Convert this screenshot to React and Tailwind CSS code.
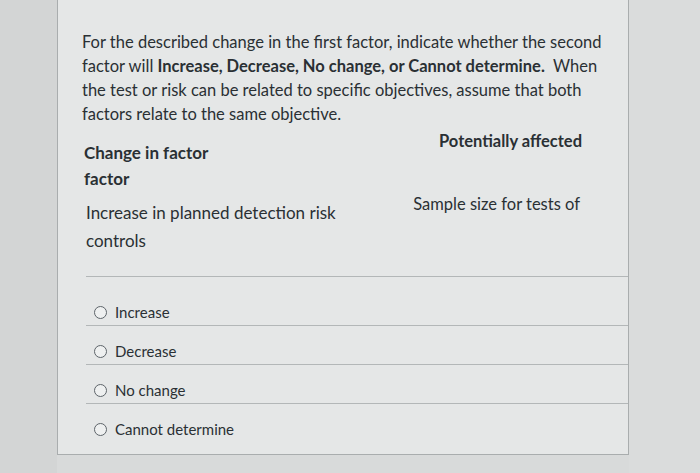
export default function App() {
  const options = ["Increase", "Decrease", "No change", "Cannot determine"];
  return (
    <div className="w-[700px] h-[473px] overflow-hidden flex bg-[#d8dada] text-[#2a3034]" style={{ fontFamily: "Lato, 'Noto Sans', sans-serif" }}>
      <div className="w-[57px] shrink-0 bg-[#d3d5d5]" />
      <div className="w-[572px] shrink-0 h-[455px] bg-[#e5e7e7] border-x border-b border-[#a9adae] flex flex-col">
        <p className="pl-[24px] pr-[10px] pt-[30px] text-[16.5px] leading-[24px]">
          For the described change in the first factor, indicate whether the second
          <br />
          factor will <b className="font-bold">Increase, Decrease, No change, or Cannot determine.</b>&nbsp; When
          <br />
          the test or risk can be related to specific objectives, assume that both
          <br />
          factors relate to the same objective.
        </p>

        <div className="flex pl-[26px] pr-[46px] mt-[2px]">
          <div className="flex-1 pt-[12px] font-bold text-[17px] leading-[26px]">
            Change in factor
            <br />
            factor
          </div>
          <div className="font-bold text-[16.5px] leading-[26px] text-right">Potentially affected</div>
        </div>

        <div className="flex pl-[28px] pr-[48px] -mt-px">
          <div className="flex-1 pt-[8px] text-[17px] leading-[28px]">
            Increase in planned detection risk
            <br />
            controls
          </div>
          <div className="text-[16.5px] leading-[26px] text-right">Sample size for tests of</div>
        </div>

        <div className="ml-[28px] mt-[21px] border-t border-[#b3b7b8]">
          {options.map((o, i) => (
            <div
              key={o}
              className={`flex items-center gap-[8px] pl-[8px] ${i === 0 ? "pt-[28px]" : "pt-[18px]"} ${i < options.length - 1 ? "pb-[5px] border-b border-[#b3b7b8]" : ""}`}
            >
              <span className="w-[13px] h-[13px] rounded-full border-[1.5px] border-[#5d6469] bg-[#eef0f0]" />
              <span className="text-[15px] leading-[15px]">{o}</span>
            </div>
          ))}
        </div>
      </div>
      <div className="flex-1 bg-[#dadcdc]" />
    </div>
  );
}
